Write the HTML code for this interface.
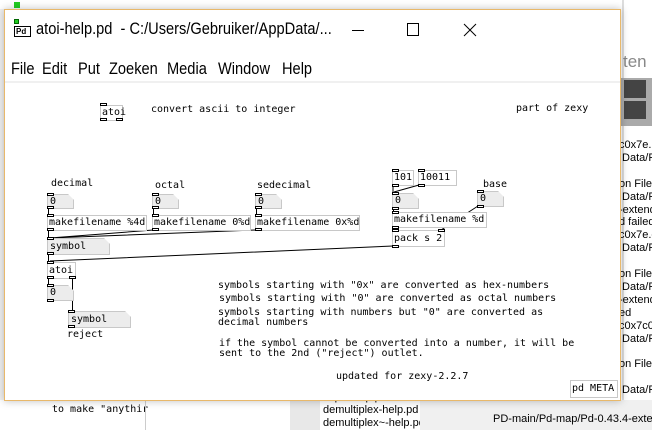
<!DOCTYPE html>
<html><head><meta charset="utf-8"><style>
*{margin:0;padding:0;box-sizing:border-box}
body{width:652px;height:430px;overflow:hidden;background:#f0f0f0;position:relative;font-family:"Liberation Sans",sans-serif}
.a{position:absolute;white-space:pre}
.m{font-family:"DejaVu Sans Mono","Liberation Mono",monospace;font-size:10px;line-height:12px;color:#000}
.ob{position:absolute;border:1px solid #c8c8c8;background:#fff;font-family:"DejaVu Sans Mono",monospace;font-size:10px;line-height:13px;padding-left:1px;white-space:pre}
.nb{position:absolute;background:#ececec;font-family:"DejaVu Sans Mono",monospace;font-size:10px;line-height:13px;padding-left:2px;white-space:pre;clip-path:polygon(0 0,calc(100% - 6px) 0,100% 6px,100% 100%,0 100%);border:1px solid #c8c8c8}
.io{position:absolute;width:7px;height:3px;border:1px solid #000;background:#fff}
.mn{position:absolute;top:59px;font-size:17px;color:#000;transform:scaleX(0.86);transform-origin:left top;white-space:pre}
</style></head><body>
<!-- background stuff -->
<div class="a" style="left:0;top:0;width:1086px;height:9px;background:#fff"></div>
<div class="a" style="left:14px;top:2px;width:6px;height:6px;background:#2c2"></div>
<div class="a" style="left:620px;top:0;width:32px;height:430px;background:#fff"></div>
<div class="a" style="left:622px;top:0;width:2px;height:430px;background:#ddd"></div>
<div class="a" style="left:623px;top:52px;font-size:17px;color:#888">ten</div>
<div class="a" style="left:620px;top:78px;width:32px;height:48px;background:#aaa"></div>
<div class="a" style="left:624px;top:80px;width:22px;height:18px;background:#444"></div>
<div class="a" style="left:624px;top:101px;width:22px;height:18px;background:#444"></div>
<div class="a" style="left:619px;top:139px;font-size:11px;line-height:12.9px;color:#000">c0x7e.r
 Data/F

on Files
 Data/F
-extend
d failed
c0x7e.c
 Data/F

on Files
 Data/F
-extend
ed
c0x7c0
 Data/F

on Files

 Data/F</div>
<div class="a" style="left:0;top:400px;width:145px;height:30px;background:#fff"></div>
<div class="a" style="left:145px;top:400px;width:300px;height:30px;background:#fff"></div>
<div class="a m" style="left:52px;top:404px">to make "anythir</div>
<div class="a" style="left:145px;top:400px;width:1px;height:30px;background:#ccc"></div>
<div class="a" style="left:290px;top:400px;width:30px;height:30px;background:#e8e8e8"></div>
<div class="a" style="left:320px;top:400px;width:100px;height:30px;background:#fff"></div>
<div class="a" style="left:323px;top:391px;font-size:11px;line-height:13px;color:#000">dsp~-help.pd
demultiplex-help.pd
demultiplex~-help.pd</div>
<div class="a" style="left:420px;top:400px;width:232px;height:30px;background:#f0f0f0"></div>
<div class="a" style="left:493px;top:413px;font-size:11px;color:#000">PD-main/Pd-map/Pd-0.43.4-extended</div>
<!-- window -->
<div class="a" style="left:4px;top:9px;width:617px;height:392px;background:#fff;border:1px solid #e8b86a;box-shadow:0 0 8px rgba(0,0,0,.25)"></div>
<div class="a" style="left:5px;top:81px;width:615px;height:2px;background:#f0f0f0"></div>
<!-- pd icon -->
<div class="a" style="left:14px;top:19px;width:5px;height:5px;background:#2c2;border:1px solid #060"></div>
<div class="a" style="left:14px;top:26px;width:17px;height:11px;border:1px solid #000;background:#fff;font-size:8px;line-height:9px;font-weight:bold;padding-left:1px">Pd</div>
<div class="mn" style="left:36px;top:19px">atoi-help.pd  - C:/Users/Gebruiker/AppData/...</div>
<div class="a" style="left:352px;top:30px;width:12px;height:1px;background:#000"></div>
<div class="a" style="left:407px;top:23px;width:12px;height:13px;border:1px solid #000"></div>
<svg class="a" style="left:463px;top:23px" width="14" height="14"><path d="M1 1L13 13M13 1L1 13" stroke="#000" stroke-width="1"/></svg>
<div class="mn" style="left:11px">File</div>
<div class="mn" style="left:42px">Edit</div>
<div class="mn" style="left:78px">Put</div>
<div class="mn" style="left:109px">Zoeken</div>
<div class="mn" style="left:167px">Media</div>
<div class="mn" style="left:218px">Window</div>
<div class="mn" style="left:282px">Help</div>

<!-- canvas -->
<svg class="a" style="left:0;top:0" width="652" height="430">
<g stroke="#000" stroke-width="1" fill="none">
<path d="M48.5 208V215M48.5 230V238M153.5 230L50 238M256.5 230L50 238M48.5 254V262M393 246L50 261M48.5 278V285M72.5 278V311M393 185V193M419 185L394 192M393.5 208V212M393.5 227V230M478 206L441 230"/>
<path d="M153.5 208V215M256.5 208V215"/>
</g></svg>

<div class="ob" style="left:100px;top:105px;width:23px;height:16px;line-height:14px">atoi</div>
<div class="io" style="left:100px;top:103px"></div><div class="io" style="left:100px;top:118px"></div><div class="io" style="left:116px;top:118px"></div>
<div class="a m" style="left:151px;top:104px">convert ascii to integer</div>
<div class="a m" style="left:516px;top:103px">part of zexy</div>

<div class="a m" style="left:51px;top:178px">decimal</div>
<div class="a m" style="left:155px;top:180px">octal</div>
<div class="a m" style="left:257px;top:180px">sedecimal</div>

<div class="nb" style="left:47px;top:194px;width:27px;height:15px">0</div>
<div class="nb" style="left:152px;top:194px;width:27px;height:15px">0</div>
<div class="nb" style="left:255px;top:194px;width:27px;height:15px">0</div>
<div class="ob" style="left:47px;top:215px;width:100px;height:16px">makefilename %4d</div>
<div class="ob" style="left:152px;top:215px;width:99px;height:16px">makefilename 0%d</div>
<div class="ob" style="left:255px;top:215px;width:105px;height:16px">makefilename 0x%d</div>
<div class="nb" style="left:47px;top:238px;width:63px;height:17px;line-height:15px">symbol</div>
<div class="ob" style="left:47px;top:262px;width:29px;height:17px;line-height:15px">atoi</div>
<div class="nb" style="left:47px;top:285px;width:27px;height:16px">0</div>
<div class="nb" style="left:68px;top:311px;width:63px;height:17px;line-height:15px">symbol</div>
<div class="a m" style="left:67px;top:329px">reject</div>

<div class="ob" style="left:392px;top:170px;width:22px;height:16px">101</div>
<div class="ob" style="left:418px;top:170px;width:39px;height:16px">10011</div>
<div class="a m" style="left:483px;top:179px">base</div>
<div class="nb" style="left:392px;top:193px;width:27px;height:16px">0</div>
<div class="nb" style="left:477px;top:191px;width:27px;height:16px">0</div>
<div class="ob" style="left:392px;top:212px;width:95px;height:16px">makefilename %d</div>
<div class="ob" style="left:392px;top:230px;width:53px;height:17px;line-height:15px">pack s 2</div>

<!-- inlets/outlets -->
<div class="io" style="left:47px;top:193px"></div><div class="io" style="left:47px;top:206px"></div>
<div class="io" style="left:152px;top:193px"></div><div class="io" style="left:152px;top:206px"></div>
<div class="io" style="left:255px;top:193px"></div><div class="io" style="left:255px;top:206px"></div>
<div class="io" style="left:47px;top:214px"></div><div class="io" style="left:47px;top:228px"></div>
<div class="io" style="left:152px;top:214px"></div><div class="io" style="left:152px;top:228px"></div>
<div class="io" style="left:255px;top:214px"></div><div class="io" style="left:255px;top:228px"></div>
<div class="io" style="left:47px;top:237px"></div><div class="io" style="left:47px;top:252px"></div>
<div class="io" style="left:47px;top:261px"></div><div class="io" style="left:47px;top:276px"></div><div class="io" style="left:69px;top:276px"></div>
<div class="io" style="left:47px;top:284px"></div><div class="io" style="left:47px;top:299px"></div>
<div class="io" style="left:68px;top:310px"></div><div class="io" style="left:68px;top:325px"></div>
<div class="io" style="left:392px;top:169px"></div><div class="io" style="left:392px;top:184px"></div>
<div class="io" style="left:418px;top:169px"></div><div class="io" style="left:418px;top:184px"></div>
<div class="io" style="left:392px;top:192px"></div><div class="io" style="left:392px;top:207px"></div>
<div class="io" style="left:477px;top:190px"></div><div class="io" style="left:477px;top:205px"></div>
<div class="io" style="left:392px;top:211px"></div><div class="io" style="left:392px;top:226px"></div>
<div class="io" style="left:392px;top:229px"></div><div class="io" style="left:438px;top:229px"></div><div class="io" style="left:392px;top:245px"></div>

<div class="a m" style="left:218px;top:280px">symbols starting with "0x" are converted as hex-numbers</div>
<div class="a m" style="left:219px;top:293px">symbols starting with "0" are converted as octal numbers</div>
<div class="a m" style="left:218px;top:308px;line-height:10px">symbols starting with numbers but "0" are converted as
decimal numbers</div>
<div class="a m" style="left:219px;top:339px;line-height:10px">if the symbol cannot be converted into a number, it will be
sent to the 2nd ("reject") outlet.</div>
<div class="a m" style="left:336px;top:371px">updated for zexy-2.2.7</div>
<div class="ob" style="left:570px;top:380px;width:48px;height:18px;line-height:16px">pd META</div>
</body></html>
